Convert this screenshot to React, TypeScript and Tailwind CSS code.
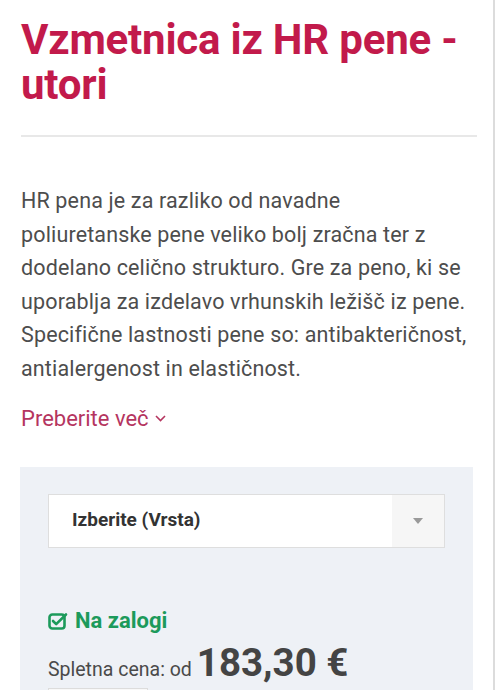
import React from "react";

const lines = [
  "HR pena je za razliko od navadne",
  "poliuretanske pene veliko bolj zračna ter z",
  "dodelano celično strukturo. Gre za peno, ki se",
  "uporablja za izdelavo vrhunskih ležišč iz pene.",
  "Specifične lastnosti pene so: antibakteričnost,",
  "antialergenost in elastičnost.",
];

export default function App() {
  return (
    <div className="flex w-[497px] bg-white" style={{ fontFamily: "Roboto, 'Liberation Sans', sans-serif" }}>
      <div className="w-[495px] h-[690px] overflow-hidden border-r-2 border-[#dcdcdc]">
        <div className="px-[21px] pt-[17px]">
          <h1 className="text-[42px] leading-[45px] font-bold text-[#c21a4b] tracking-[-0.2px]">
            Vzmetnica iz HR pene - utori
          </h1>
          <div className="mt-[28px] h-[2px] w-[456px] bg-[#e8e8e8]" />
          <p className="mt-[47px] text-[21.5px] leading-[33.6px] text-[#4d4d4d] tracking-[0.15px]">
            {lines.map((l, i) => (
              <span key={i} className="block whitespace-nowrap">{l}</span>
            ))}
          </p>
          <div className="mt-[20px] flex items-center gap-[6px] text-[22px] leading-[26px] text-[#b5355f]">
            <span>Preberite več</span>
            <svg width="11" height="7" viewBox="0 0 11 7" fill="none" stroke="currentColor" strokeWidth="1.6">
              <path d="M1 1l4.5 4.5L10 1" />
            </svg>
          </div>
        </div>
        <div className="mx-[20px] mt-[35px] bg-[#eef1f6] px-[28px] pt-[27px] pb-[40px]">
          <div className="flex h-[54px] border border-[#dedede] bg-white">
            <div className="flex flex-1 items-center pl-[23px] text-[19px] font-bold text-[#333]">
              Izberite (Vrsta)
            </div>
            <div className="flex w-[52px] items-center justify-center bg-[#f6f6f6]">
              <svg width="10" height="6" viewBox="0 0 10 6">
                <path d="M0 0h10L5 6z" fill="#9a9a9a" />
              </svg>
            </div>
          </div>
          <div className="mt-[60px] flex items-center gap-[7px] text-[22px] font-bold leading-[26px] text-[#1c9a5b]">
            <svg width="20" height="18" viewBox="0 0 20 18" fill="none" stroke="currentColor" strokeWidth="2.6" strokeLinecap="round" strokeLinejoin="round">
              <rect x="1.5" y="2.5" width="15" height="14" rx="2.8" />
              <path d="M5 9l3.2 3.2L18 2.5" />
            </svg>
            <span>Na zalogi</span>
          </div>
          <div className="mt-[6px] flex items-baseline gap-[5px] text-[#4a4a4a]">
            <span className="text-[19.5px]">Spletna cena: od</span>
            <span className="text-[38.5px] font-bold leading-[46px] text-[#444]">183,30 €</span>
          </div>
          <div className="mt-[2px] h-[40px] w-[100px] border border-[#dcdcdc] bg-[#f8f8f8]" />
        </div>
      </div>
    </div>
  );
}
